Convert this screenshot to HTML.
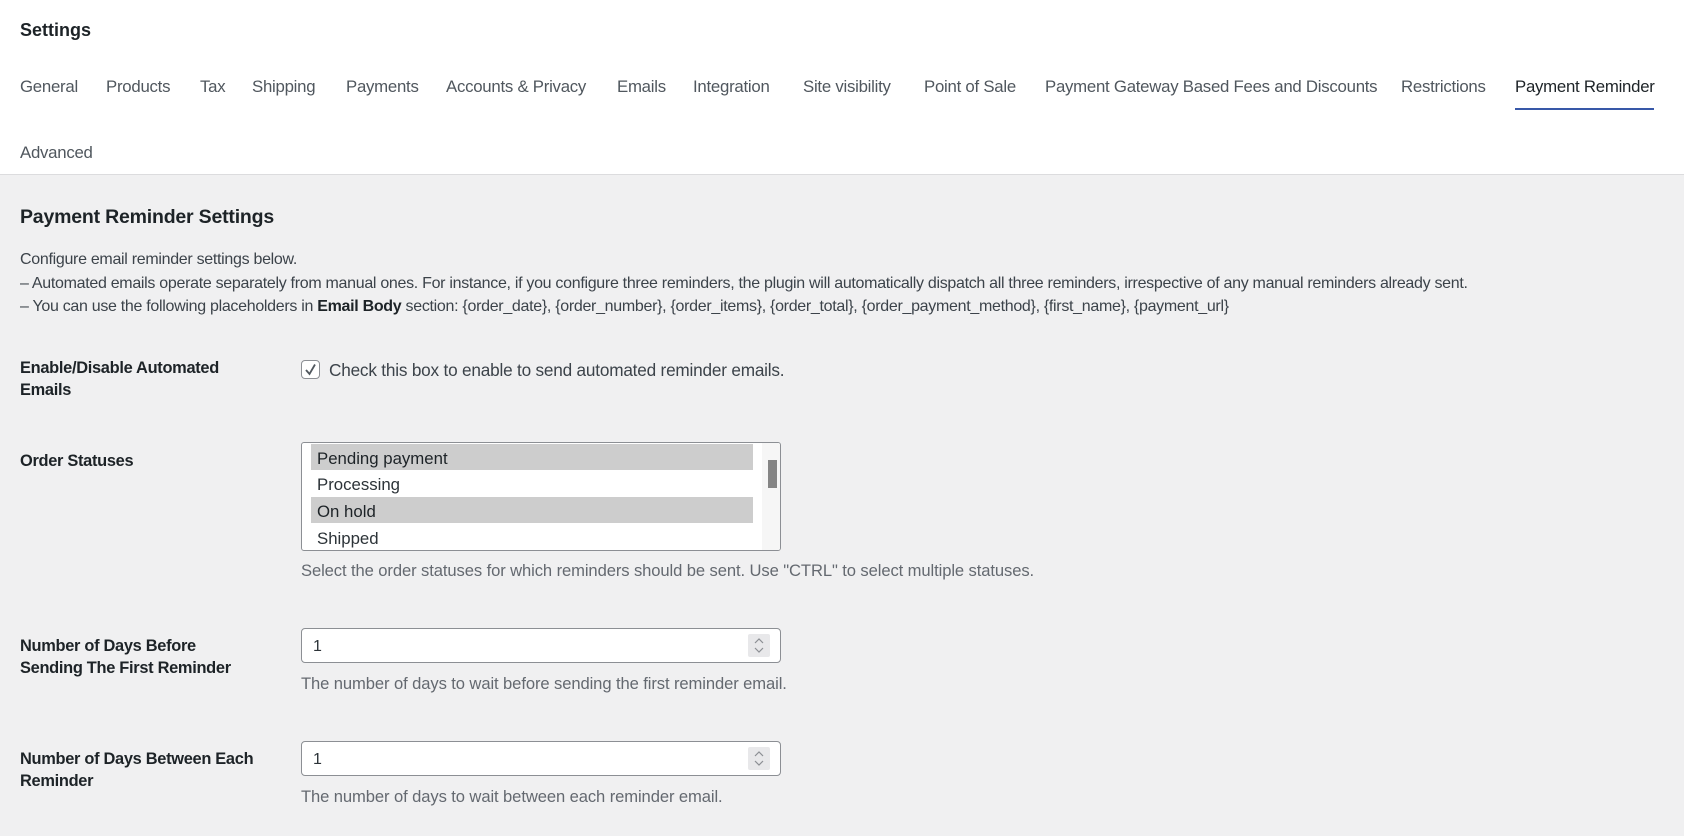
<!DOCTYPE html>
<html><head><meta charset="utf-8"><style>
*{margin:0;padding:0;box-sizing:border-box}
body{width:1684px;height:836px;background:#f0f0f1;font-family:"Liberation Sans",sans-serif;color:#1d2327;position:relative;overflow:hidden}
.hdr{position:absolute;left:0;top:0;width:1684px;height:175px;background:#fff;border-bottom:1px solid #dcdcde}
.a{position:absolute;white-space:nowrap}
.tab{position:absolute;top:77px;font-size:16.8px;color:#50575e;white-space:nowrap;letter-spacing:-0.25px}
.lbl{position:absolute;left:20px;font-size:16.4px;font-weight:bold;line-height:22px;color:#1d2327;letter-spacing:-0.3px}
.desc{position:absolute;left:301px;font-size:16.6px;color:#646970;white-space:nowrap;letter-spacing:-0.1px}
.p{position:absolute;left:20px;font-size:16px;color:#3c434a;white-space:nowrap;letter-spacing:-0.3px}
.inp{position:absolute;left:301px;width:480px;height:35px;background:#fff;border:1px solid #8c8f94;border-radius:4px}
.inp span{position:absolute;left:11px;top:9px;font-size:16px;color:#2c3338}
.spin{position:absolute;right:10px;top:5px;width:22px;height:23px;background:#e8e8ea;border-radius:2px}
</style></head><body>
<div class="hdr">
<div class="a" style="left:20px;top:20px;font-size:18px;font-weight:bold;color:#1d2327">Settings</div>
<div class="tab" style="left:20px">General</div>
<div class="tab" style="left:106px">Products</div>
<div class="tab" style="left:200px">Tax</div>
<div class="tab" style="left:252px">Shipping</div>
<div class="tab" style="left:346px">Payments</div>
<div class="tab" style="left:446px">Accounts &amp; Privacy</div>
<div class="tab" style="left:617px">Emails</div>
<div class="tab" style="left:693px">Integration</div>
<div class="tab" style="left:803px">Site visibility</div>
<div class="tab" style="left:924px">Point of Sale</div>
<div class="tab" style="left:1045px">Payment Gateway Based Fees and Discounts</div>
<div class="tab" style="left:1401px">Restrictions</div>
<div class="tab" style="left:1515px;color:#1d2327">Payment Reminder</div>
<div class="a" style="left:1515px;top:108px;width:139px;height:2px;background:#3858a8"></div>
<div class="tab" style="left:20px;top:143px">Advanced</div>
</div>

<div class="a" style="left:20px;top:206px;font-size:19.5px;font-weight:bold;letter-spacing:-0.2px">Payment Reminder Settings</div>
<div class="p" style="top:251px">Configure email reminder settings below.</div>
<div class="p" style="top:275px">– Automated emails operate separately from manual ones. For instance, if you configure three reminders, the plugin will automatically dispatch all three reminders, irrespective of any manual reminders already sent.</div>
<div class="p" style="top:298px">– You can use the following placeholders in <b style="color:#1d2327">Email Body</b> section: {order_date}, {order_number}, {order_items}, {order_total}, {order_payment_method}, {first_name}, {payment_url}</div>

<div class="lbl" style="top:357px">Enable/Disable Automated<br>Emails</div>
<div class="a" style="left:301px;top:360px;width:19px;height:19px;border:1px solid #8c8f94;border-radius:4px;background:#fff">
<svg width="17" height="17" viewBox="0 0 17 17" style="position:absolute;left:0;top:0"><path d="M4 9 L7.5 13 L13 3.5" fill="none" stroke="#50575e" stroke-width="1.8"/></svg></div>
<div class="a" style="left:329px;top:360px;font-size:17.2px;color:#3c434a;letter-spacing:-0.2px">Check this box to enable to send automated reminder emails.</div>

<div class="lbl" style="top:450px">Order Statuses</div>
<div class="a" style="left:301px;top:442px;width:480px;height:109px;border:1px solid #8c8f94;border-radius:3px;background:#fff;overflow:hidden">
<div class="a" style="left:9px;top:1px;width:442px;height:26px;background:#cdcdcd"></div>
<div class="a" style="left:9px;top:54px;width:442px;height:26px;background:#cdcdcd"></div>
<div class="a" style="left:15px;top:6px;font-size:16.8px;color:#1d2327">Pending payment</div>
<div class="a" style="left:15px;top:32px;font-size:16.8px;color:#2c3338">Processing</div>
<div class="a" style="left:15px;top:59px;font-size:16.8px;color:#1d2327">On hold</div>
<div class="a" style="left:15px;top:86px;font-size:16.8px;color:#2c3338">Shipped</div>
<div class="a" style="left:460px;top:0;width:18px;height:109px;background:#f6f6f6"></div>
<div class="a" style="left:466px;top:17px;width:9px;height:28px;background:#858585"></div>
</div>
<div class="desc" style="top:561px">Select the order statuses for which reminders should be sent. Use "CTRL" to select multiple statuses.</div>

<div class="lbl" style="top:635px">Number of Days Before<br>Sending The First Reminder</div>
<div class="inp" style="top:628px"><span>1</span><div class="spin"><svg width="22" height="23"><path d="M7 9 L11 5 L15 9 M7 14 L11 18 L15 14" fill="none" stroke="#8c8f94" stroke-width="1.2"/></svg></div></div>
<div class="desc" style="top:674px">The number of days to wait before sending the first reminder email.</div>

<div class="lbl" style="top:748px">Number of Days Between Each<br>Reminder</div>
<div class="inp" style="top:741px"><span>1</span><div class="spin"><svg width="22" height="23"><path d="M7 9 L11 5 L15 9 M7 14 L11 18 L15 14" fill="none" stroke="#8c8f94" stroke-width="1.2"/></svg></div></div>
<div class="desc" style="top:787px">The number of days to wait between each reminder email.</div>
</body></html>
